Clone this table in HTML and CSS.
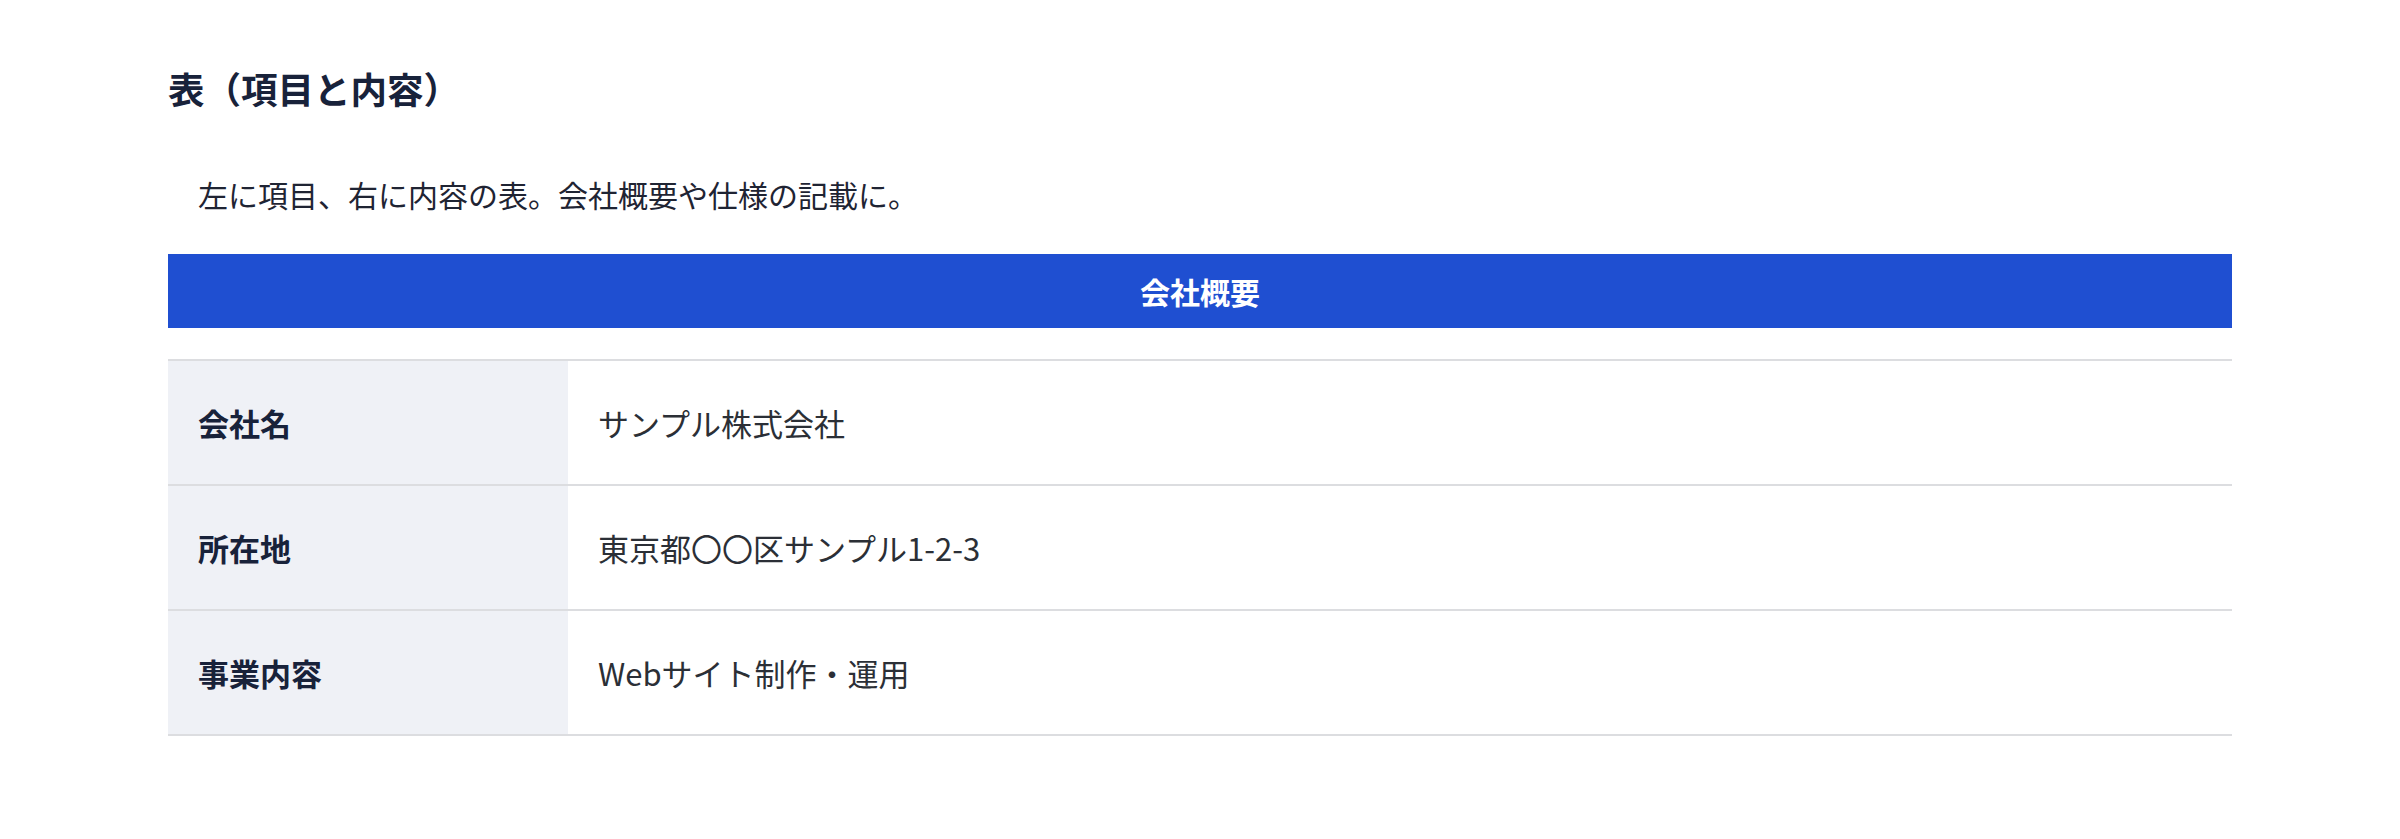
FILE: index.html
```html
<!DOCTYPE html>
<html lang="ja">
<head>
<meta charset="utf-8">
<title>表（項目と内容）</title>
<link rel="stylesheet" href="styles.css">
</head>
<body>
<main class="page">
  <h2 class="section-title">表（項目と内容）</h2>
  <p class="lead">左に項目、右に内容の表。会社概要や仕様の記載に。</p>
  <div class="table-title">会社概要</div>
  <table class="spec-table">
    <tbody>
      <tr>
        <th>会社名</th>
        <td>サンプル株式会社</td>
      </tr>
      <tr>
        <th>所在地</th>
        <td>東京都〇〇区サンプル1-2-3</td>
      </tr>
      <tr>
        <th>事業内容</th>
        <td>Webサイト制作・運用</td>
      </tr>
    </tbody>
  </table>
</main>
</body>
</html>
```
FILE: styles.css
```css
html, body {
  margin: 0;
  padding: 0;
  background: #ffffff;
}

body {
  font-family: "Noto Sans CJK JP", "Noto Sans", sans-serif;
  color: #2b2f36;
}

.page {
  padding: 62px 168px 0;
}

.section-title {
  margin: 0;
  font-size: 36.5px;
  line-height: 54px;
  font-weight: 700;
  color: #18223a;
}

.lead {
  margin: 51px 0 0;
  font-size: 30px;
  line-height: 54px;
  text-indent: 30px;
  color: #1f2433;
}

.table-title {
  margin-top: 33px;
  background: #1f4fd1;
  color: #ffffff;
  font-size: 30px;
  font-weight: 700;
  line-height: 44px;
  padding: 15px 0;
  text-align: center;
}

.spec-table {
  width: 100%;
  margin-top: 31px;
  border-collapse: collapse;
  border-top: 2px solid #dcdde0;
}

.spec-table tr {
  border-bottom: 2px solid #dcdde0;
}

.spec-table th,
.spec-table td {
  padding: 36px 30px;
  font-size: 31px;
  line-height: 51px;
  text-align: left;
  vertical-align: middle;
}

.spec-table th {
  width: 340px;
  background: #eff1f6;
  font-weight: 700;
  color: #18223a;
}

.spec-table td {
  font-weight: 400;
  color: #2b2f36;
}
```
